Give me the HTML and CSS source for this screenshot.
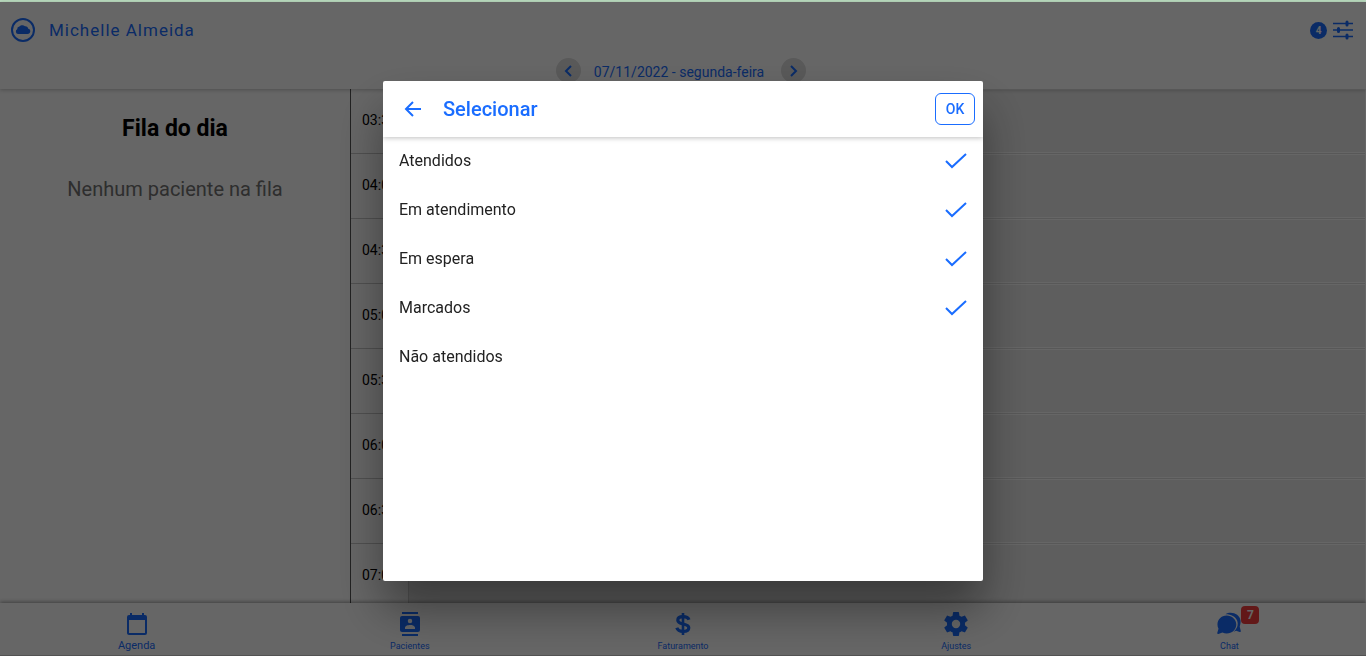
FILE: index.html
```html
<!DOCTYPE html>
<html lang="pt-BR">
<head>
<meta charset="utf-8">
<meta name="viewport" content="width=device-width, initial-scale=1">
<title>Agenda</title>
<link rel="stylesheet" href="styles.css">
</head>
<body>
<div class="app">
  <header class="header">
    <div class="toolbar">
      <svg class="logo" viewBox="0 0 24 24" aria-hidden="true"><circle cx="12" cy="12" r="11" fill="none" stroke="currentColor" stroke-width="2"/><path fill="currentColor" d="M7 16a2.500 2.500 0 0 1-.8-4.700 2.600 2.600 0 0 1 2.200-2.700C9.700 6.800 12.500 6.600 14 8.300c1.800-.2 3 .8 3.200 2.500 1.500.3 2.300 1.400 2.100 2.700-.2 1.500-1.100 2.500-2.800 2.500z"/></svg>
      <h1 class="user">Michelle Almeida</h1>
      <button class="filter" type="button" aria-label="Filtros">
        <span class="count">4</span>
        <svg class="sliders" viewBox="0 0 20 20" fill="none" stroke="currentColor" aria-hidden="true"><path stroke-width="1.600" d="M0 3.500H20M0 10H20M0 16.500H20"/><path stroke-width="3" stroke-linecap="round" d="M14 2v3M5.500 8.500v3M14 15v3"/></svg>
      </button>
    </div>
    <nav class="dates">
      <button class="round" type="button" aria-label="Dia anterior"><svg viewBox="0 0 12 12" aria-hidden="true"><path d="M8 1 3 6l5 5"/></svg></button>
      <span class="date">07/11/2022 - segunda-feira</span>
      <button class="round" type="button" aria-label="Próximo dia"><svg viewBox="0 0 12 12" aria-hidden="true"><path d="m3 1 5 5-5 5"/></svg></button>
    </nav>
  </header>
  <main class="main">
    <aside class="queue">
      <h2 class="queue-title">Fila do dia</h2>
      <p class="queue-empty">Nenhum paciente na fila</p>
    </aside>
    <section class="schedule">
      <div class="slot"><time class="hour">03:30</time><div class="cell"></div></div>
      <div class="slot"><time class="hour">04:00</time><div class="cell"></div></div>
      <div class="slot"><time class="hour">04:30</time><div class="cell"></div></div>
      <div class="slot"><time class="hour">05:00</time><div class="cell"></div></div>
      <div class="slot"><time class="hour">05:30</time><div class="cell"></div></div>
      <div class="slot"><time class="hour">06:00</time><div class="cell"></div></div>
      <div class="slot"><time class="hour">06:30</time><div class="cell"></div></div>
      <div class="slot"><time class="hour">07:00</time><div class="cell"></div></div>
    </section>
  </main>
  <nav class="tabs">
    <a class="tab active" href="#agenda"><svg class="tab-icon" viewBox="0 0 24 24" aria-hidden="true"><path fill="currentColor" d="M20 3h-1V1h-2v2H7V1H5v2H4a2 2 0 0 0-2 2v16c0 1.100.9 2 2 2h16a2 2 0 0 0 2-2V5a2 2 0 0 0-2-2zm0 18H4V8h16z"/></svg>Agenda</a>
    <a class="tab" href="#pacientes"><svg class="tab-icon" viewBox="0 0 24 24" aria-hidden="true"><path fill="currentColor" d="M20 0H4v2h16zM4 24h16v-2H4zM20 4H4a2 2 0 0 0-2 2v12c0 1.100.9 2 2 2h16a2 2 0 0 0 2-2V6a2 2 0 0 0-2-2zm-8 2.750a2.250 2.250 0 1 1 0 4.500 2.250 2.250 0 0 1 0-4.500zM17 17H7v-1.500c0-1.670 3.330-2.500 5-2.500s5 .83 5 2.500z"/></svg>Pacientes</a>
    <a class="tab" href="#faturamento"><svg class="tab-icon" viewBox="0 0 24 24" fill="none" stroke="currentColor" stroke-width="3.200" aria-hidden="true"><path d="M18 7.800C17.200 5.700 15.200 4.700 12 4.700c-3.300 0-5.200 1.200-5.200 3.500 0 5.200 11 2.300 11 7.600 0 2.400-2.200 3.600-5.800 3.600-3.300 0-5.400-1.200-6.200-3.600"/><path d="M12 1v22" stroke-width="2.600"/></svg>Faturamento</a>
    <a class="tab" href="#ajustes"><svg class="tab-icon" viewBox="2 2 20 20" aria-hidden="true"><path fill="currentColor" d="M19.430 12.980c.04-.32.070-.64.070-.98s-.03-.66-.07-.98l2.110-1.650c.19-.15.240-.42.120-.64l-2-3.460c-.12-.22-.39-.3-.61-.22l-2.490 1c-.52-.4-1.080-.73-1.690-.98l-.38-2.650A.49.49 0 0 0 14 2h-4c-.25 0-.46.180-.49.420l-.38 2.650c-.61.250-1.170.590-1.690.980l-2.490-1c-.23-.09-.49 0-.61.220l-2 3.460c-.13.220-.07.490.120.640l2.110 1.650c-.04.320-.07.650-.07.980s.03.660.070.980l-2.110 1.650c-.19.150-.24.420-.12.640l2 3.460c.12.220.39.300.61.220l2.490-1c.52.400 1.080.730 1.690.980l.38 2.650c.03.240.24.420.49.420h4c.25 0 .46-.18.490-.42l.38-2.650c.61-.25 1.170-.59 1.690-.98l2.490 1c.23.090.49 0 .61-.22l2-3.460c.12-.22.070-.49-.12-.64zM12 15.500a3.500 3.500 0 1 1 0-7 3.500 3.500 0 0 1 0 7z"/></svg>Ajustes</a>
    <a class="tab" href="#chat"><span class="chat"><svg class="tab-icon" viewBox="0 0 24 24" aria-hidden="true"><path fill="currentColor" d="M8.500 2.200C14-1.300 22.700 1.800 23.500 8.500c.3 2.500-.5 4.700-.8 6.300l1.100 4.200c.2.800-.4 1.300-1.100 1l-3.600-1.300-2.500 1.100c3.700-3 5.100-7.500 3.400-11.500C18.300 4.500 14.200 2.100 8.500 2.200z"/><path fill="currentColor" d="M9.700 3.500c5.300 0 9.600 4 9.600 9s-4.300 9-9.600 9c-1.400 0-3-.4-4.300-1l-4 1.400c-.8.300-1.300-.3-1.100-1.100l1.200-4.100C-1.600 10.500 2.600 3.500 9.700 3.500z"/></svg><span class="unread">7</span></span>Chat</a>
  </nav>
</div>
<div class="backdrop">
  <div class="modal" role="dialog" aria-modal="true" aria-labelledby="modal-title">
    <div class="modal-header">
      <button class="back" type="button" aria-label="Voltar"><svg viewBox="0 0 18 18" aria-hidden="true"><path d="M9 2 2 9l7 7M2 9h15"/></svg></button>
      <h2 class="modal-title" id="modal-title">Selecionar</h2>
      <button class="ok" type="button">OK</button>
    </div>
    <div class="options">
      <label class="option">Atendidos<input class="box" type="checkbox" checked><svg class="check" viewBox="0 0 22 18" aria-hidden="true"><path d="m1 9 6 6L21 2"/></svg></label>
      <label class="option">Em atendimento<input class="box" type="checkbox" checked><svg class="check" viewBox="0 0 22 18" aria-hidden="true"><path d="m1 9 6 6L21 2"/></svg></label>
      <label class="option">Em espera<input class="box" type="checkbox" checked><svg class="check" viewBox="0 0 22 18" aria-hidden="true"><path d="m1 9 6 6L21 2"/></svg></label>
      <label class="option">Marcados<input class="box" type="checkbox" checked><svg class="check" viewBox="0 0 22 18" aria-hidden="true"><path d="m1 9 6 6L21 2"/></svg></label>
      <label class="option">Não atendidos<input class="box" type="checkbox"><svg class="check" viewBox="0 0 22 18" aria-hidden="true"><path d="m1 9 6 6L21 2"/></svg></label>
    </div>
  </div>
</div>
</body>
</html>
```

FILE: styles.css
```css
* { box-sizing: border-box; }
:root { --blue: #1a6dff; }
body { margin: 0; font-family: Roboto, "Liberation Sans", sans-serif; color: #000; overflow: hidden; }
h1, h2, p { margin: 0; }
button { font: inherit; color: inherit; border: 0; background: none; padding: 0; cursor: pointer; }
svg { display: block; }

.app { display: flex; flex-direction: column; height: 100vh; border-top: 2px solid #b9dabe; background: #fff; }

.header { flex: none; color: var(--blue); background: #fff; box-shadow: 0 1px 4px rgba(0, 0, 0, .25); z-index: 1; }
.toolbar { display: flex; align-items: center; height: 56px; padding: 0 13px 0 11px; }
.logo { width: 24px; height: 24px; }
.user { margin-left: 14px; font-size: 17px; font-weight: 400; letter-spacing: 1px; }
.filter { display: flex; align-items: center; gap: 6px; margin-left: auto; }
.count { width: 17px; height: 17px; border-radius: 50%; background: var(--blue); color: #fff; font-size: 10px; line-height: 17px; font-weight: 700; text-align: center; }
.sliders { width: 20px; height: 20px; }
.dates { display: flex; justify-content: center; align-items: center; height: 31px; padding: 0 4px 6px 0; }
.date { width: 200px; padding: 2px 4px 0 0; font-size: 14px; text-align: center; }
.round { display: grid; place-items: center; width: 25px; height: 25px; border-radius: 50%; background: #dedede; }
.round svg { width: 12px; height: 12px; fill: none; stroke: currentColor; stroke-width: 2; }

.main { flex: 1; display: flex; min-height: 0; }
.queue { width: 351px; border-right: 1px solid #555; text-align: center; }
.queue-title { padding-top: 25px; font-size: 23px; line-height: 30px; font-weight: 700; }
.queue-empty { padding-top: 32px; font-size: 20px; line-height: 26px; color: #737373; }
.schedule { flex: 1; overflow: hidden; }
.slot { display: flex; height: 65px; }
.hour { width: 58px; padding-left: 11px; border-right: 1px solid #d2d2d2; border-bottom: 1px solid #c8c8c8; font-size: 14px; line-height: 62px; }
.cell { flex: 1; margin-right: 1px; border-top: 1px solid #fff; border-bottom: 1px solid #dcdcdc; background: #ebebeb; box-shadow: inset 0 -1px #fff; }

.tabs { flex: none; display: flex; height: 53px; background: #fff; border-bottom: 1px solid #ccc; box-shadow: 0 -1px 4px rgba(0, 0, 0, .4); z-index: 1; }
.tab { flex: 1; display: flex; flex-direction: column; align-items: center; gap: 4px; padding-top: 9px; color: var(--blue); font-size: 9px; line-height: 12px; text-decoration: none; }
.tab.active { font-size: 11px; }
.tab-icon { width: 24px; height: 24px; }
.chat { position: relative; }
.unread { position: absolute; left: 24px; top: -6px; width: 18px; height: 18px; border-radius: 4px; background: #f53d3d; color: #fff; font-size: 12px; line-height: 18px; font-weight: 700; text-align: center; }

.backdrop { position: fixed; inset: 2px 0 0; z-index: 10; display: grid; place-items: center; padding-top: 4px; background: rgba(0, 0, 0, .6); }
.modal { width: 600px; max-width: 100%; height: 500px; max-height: 100%; overflow: hidden; border-radius: 2px; background: #fff; box-shadow: 0 28px 48px rgba(0, 0, 0, .4); }
.modal-header { position: relative; display: flex; align-items: center; height: 56px; padding: 0 8px 0 21px; color: var(--blue); box-shadow: 0 1px 5px rgba(0, 0, 0, .25); }
.back svg { width: 18px; height: 18px; fill: none; stroke: currentColor; stroke-width: 2; }
.modal-title { margin-left: 21px; font-size: 20px; font-weight: 500; }
.ok { width: 40px; height: 32px; margin-left: auto; border: 1px solid var(--blue); border-radius: 6px; font-size: 14px; font-weight: 500; }
.option { display: grid; grid-template-columns: 1fr 22px; align-items: center; height: 49px; padding: 0 16px 2px; font-size: 16px; color: #222; }
.box { grid-area: 1 / 2; appearance: none; width: 22px; height: 22px; margin: 0; }
.check { grid-area: 1 / 2; width: 22px; height: 18px; fill: none; stroke: var(--blue); stroke-width: 2; visibility: hidden; pointer-events: none; }
.box:checked + .check { visibility: visible; }
```
